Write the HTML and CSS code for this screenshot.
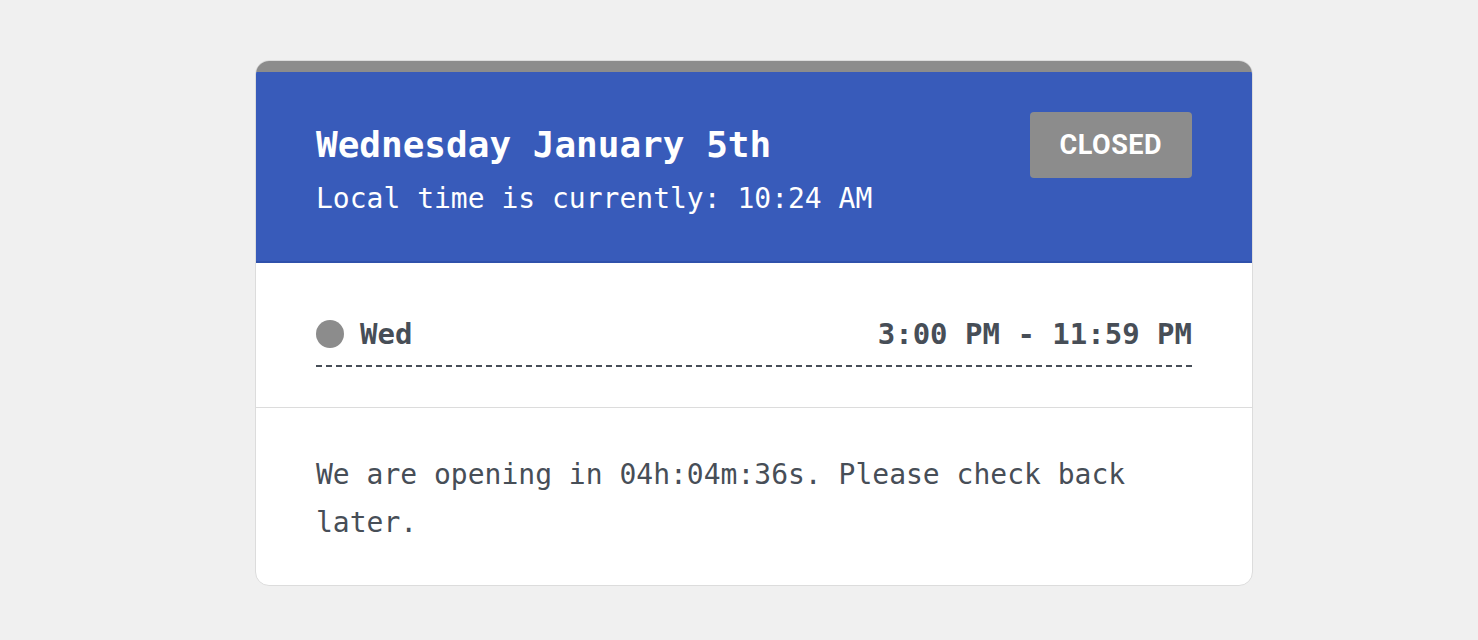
FILE: index.html
```html
<!DOCTYPE html>
<html lang="en">
<head>
    <meta charset="UTF-8">
    <meta name="viewport" content="width=device-width, initial-scale=1.0">
    <title>Opening Hours</title>
    <link rel="stylesheet" href="styles.css">
</head>
<body>

    <div class="hours-card">
        <div class="card-top"></div>

        <div class="card-header">
            <div class="header-row">
                <h1>Wednesday January 5th</h1>
                <span class="status-badge">CLOSED</span>
            </div>
            <p class="local-time">Local time is currently: 10:24 AM</p>
        </div>

        <div class="hours-section">
            <div class="hours-row">
                <span class="day">
                    <span class="dot"></span>
                    Wed
                </span>
                <span class="range">3:00 PM - 11:59 PM</span>
            </div>
        </div>

        <div class="message-section">
            <p>We are opening in 04h:04m:36s. Please check back later.</p>
        </div>
    </div>

</body>
</html>
```

FILE: styles.css
```css
body {
    font-family: "DejaVu Sans Mono", "Liberation Mono", monospace;
    margin: 0;
    padding: 60px 0 0 30px;
    background-color: #f0f0f0;
    color: #474e57;
}

.hours-card {
    width: 996px;
    margin: 0 auto;
    background-color: #fff;
    border: 1px solid #dcdcdc;
    border-radius: 14px;
    overflow: hidden;
}

.card-top {
    height: 11px;
    background-color: #8c8c8c;
}

.card-header {
    background-color: #385bba;
    border-bottom: 2px solid #3051ab;
    padding: 40px 60px 45px;
    color: #fff;
}

.header-row {
    display: flex;
    align-items: center;
    justify-content: space-between;
}

.header-row h1 {
    font-size: 36px;
    font-weight: bold;
    line-height: 1.2;
    margin: 0;
}

.status-badge {
    display: flex;
    align-items: center;
    height: 66px;
    padding: 0 30px;
    border-radius: 4px;
    background-color: #8c8c8c;
    font-family: Roboto, "Liberation Sans", sans-serif;
    font-size: 27px;
    font-weight: bold;
    letter-spacing: 0.5px;
}

.local-time {
    font-size: 28px;
    line-height: 1.2;
    margin: 4px 0 0;
}

.hours-section {
    padding: 54px 60px 40px;
    border-bottom: 1px solid #dcdcdc;
}

.hours-row {
    display: flex;
    align-items: center;
    justify-content: space-between;
    padding-bottom: 14px;
    border-bottom: 2px dashed #474e57;
    font-size: 29px;
    font-weight: bold;
    line-height: 1.2;
}

.day {
    display: flex;
    align-items: center;
    gap: 16px;
}

.dot {
    width: 28px;
    height: 28px;
    border-radius: 50%;
    background-color: #8c8c8c;
}

.message-section {
    padding: 43px 60px 38px;
}

.message-section p {
    font-size: 28px;
    line-height: 48px;
    margin: 0;
}
```
